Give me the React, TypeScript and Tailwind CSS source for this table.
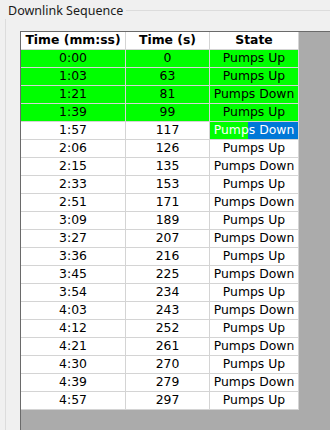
const rows: [string, number, string][] = [
  ["0:00", 0, "Pumps Up"],
  ["1:03", 63, "Pumps Up"],
  ["1:21", 81, "Pumps Down"],
  ["1:39", 99, "Pumps Up"],
  ["1:57", 117, "Pumps Down"],
  ["2:06", 126, "Pumps Up"],
  ["2:15", 135, "Pumps Down"],
  ["2:33", 153, "Pumps Up"],
  ["2:51", 171, "Pumps Down"],
  ["3:09", 189, "Pumps Up"],
  ["3:27", 207, "Pumps Down"],
  ["3:36", 216, "Pumps Up"],
  ["3:45", 225, "Pumps Down"],
  ["3:54", 234, "Pumps Up"],
  ["4:03", 243, "Pumps Down"],
  ["4:12", 252, "Pumps Up"],
  ["4:21", 261, "Pumps Down"],
  ["4:30", 270, "Pumps Up"],
  ["4:39", 279, "Pumps Down"],
  ["4:57", 297, "Pumps Up"],
];

const cell = "flex items-center justify-center border-r border-b border-[#d4d4d4] leading-none";

const App = () => {
  return (
    <div className="relative w-[330px] h-[430px] overflow-hidden bg-[#f0f0f0] font-['DejaVu_Sans',sans-serif] text-[12.4px] text-black">
      {/* group box frame */}
      <div className="absolute left-[5px] top-[10px] w-[340px] h-[440px] border border-[#dcdcdc]" />
      <div className="absolute left-[5px] top-[3px] px-[3px] bg-[#f0f0f0] font-['Noto_Sans',sans-serif] text-[12.5px] leading-[16px] text-[#1a1a1a]">
        Downlink Sequence
      </div>

      <div className="relative ml-[20px] mt-[31px] h-[400px] bg-[#ababab] border-l border-t border-[#6a6a6a]">
        <div className="flex flex-col w-[278px]">
          <div className="flex h-[18px] bg-white font-bold">
            <div className={`${cell} w-[105px]`}>Time (mm:ss)</div>
            <div className={`${cell} w-[84px]`}>Time (s)</div>
            <div className={`${cell} w-[89px]`}>State</div>
          </div>
          {rows.map(([mmss, secs, state], i) => {
            const bg = i < 4 ? "bg-[#00ff00]" : "bg-white";
            const selected = i === 4;
            return (
              <div key={i} className={`flex h-[18px] ${bg}`}>
                <div className={`${cell} w-[105px]`}>{mmss}</div>
                <div className={`${cell} w-[84px]`}>{secs}</div>
                {selected ? (
                  <div className={`${cell} w-[89px] text-white bg-[linear-gradient(to_right,#00ff00_0,#00ff00_38px,#0078d7_38px)]`}>
                    {state}
                  </div>
                ) : (
                  <div className={`${cell} w-[89px]`}>{state}</div>
                )}
              </div>
            );
          })}
        </div>
      </div>
    </div>
  );
};

export default App;
